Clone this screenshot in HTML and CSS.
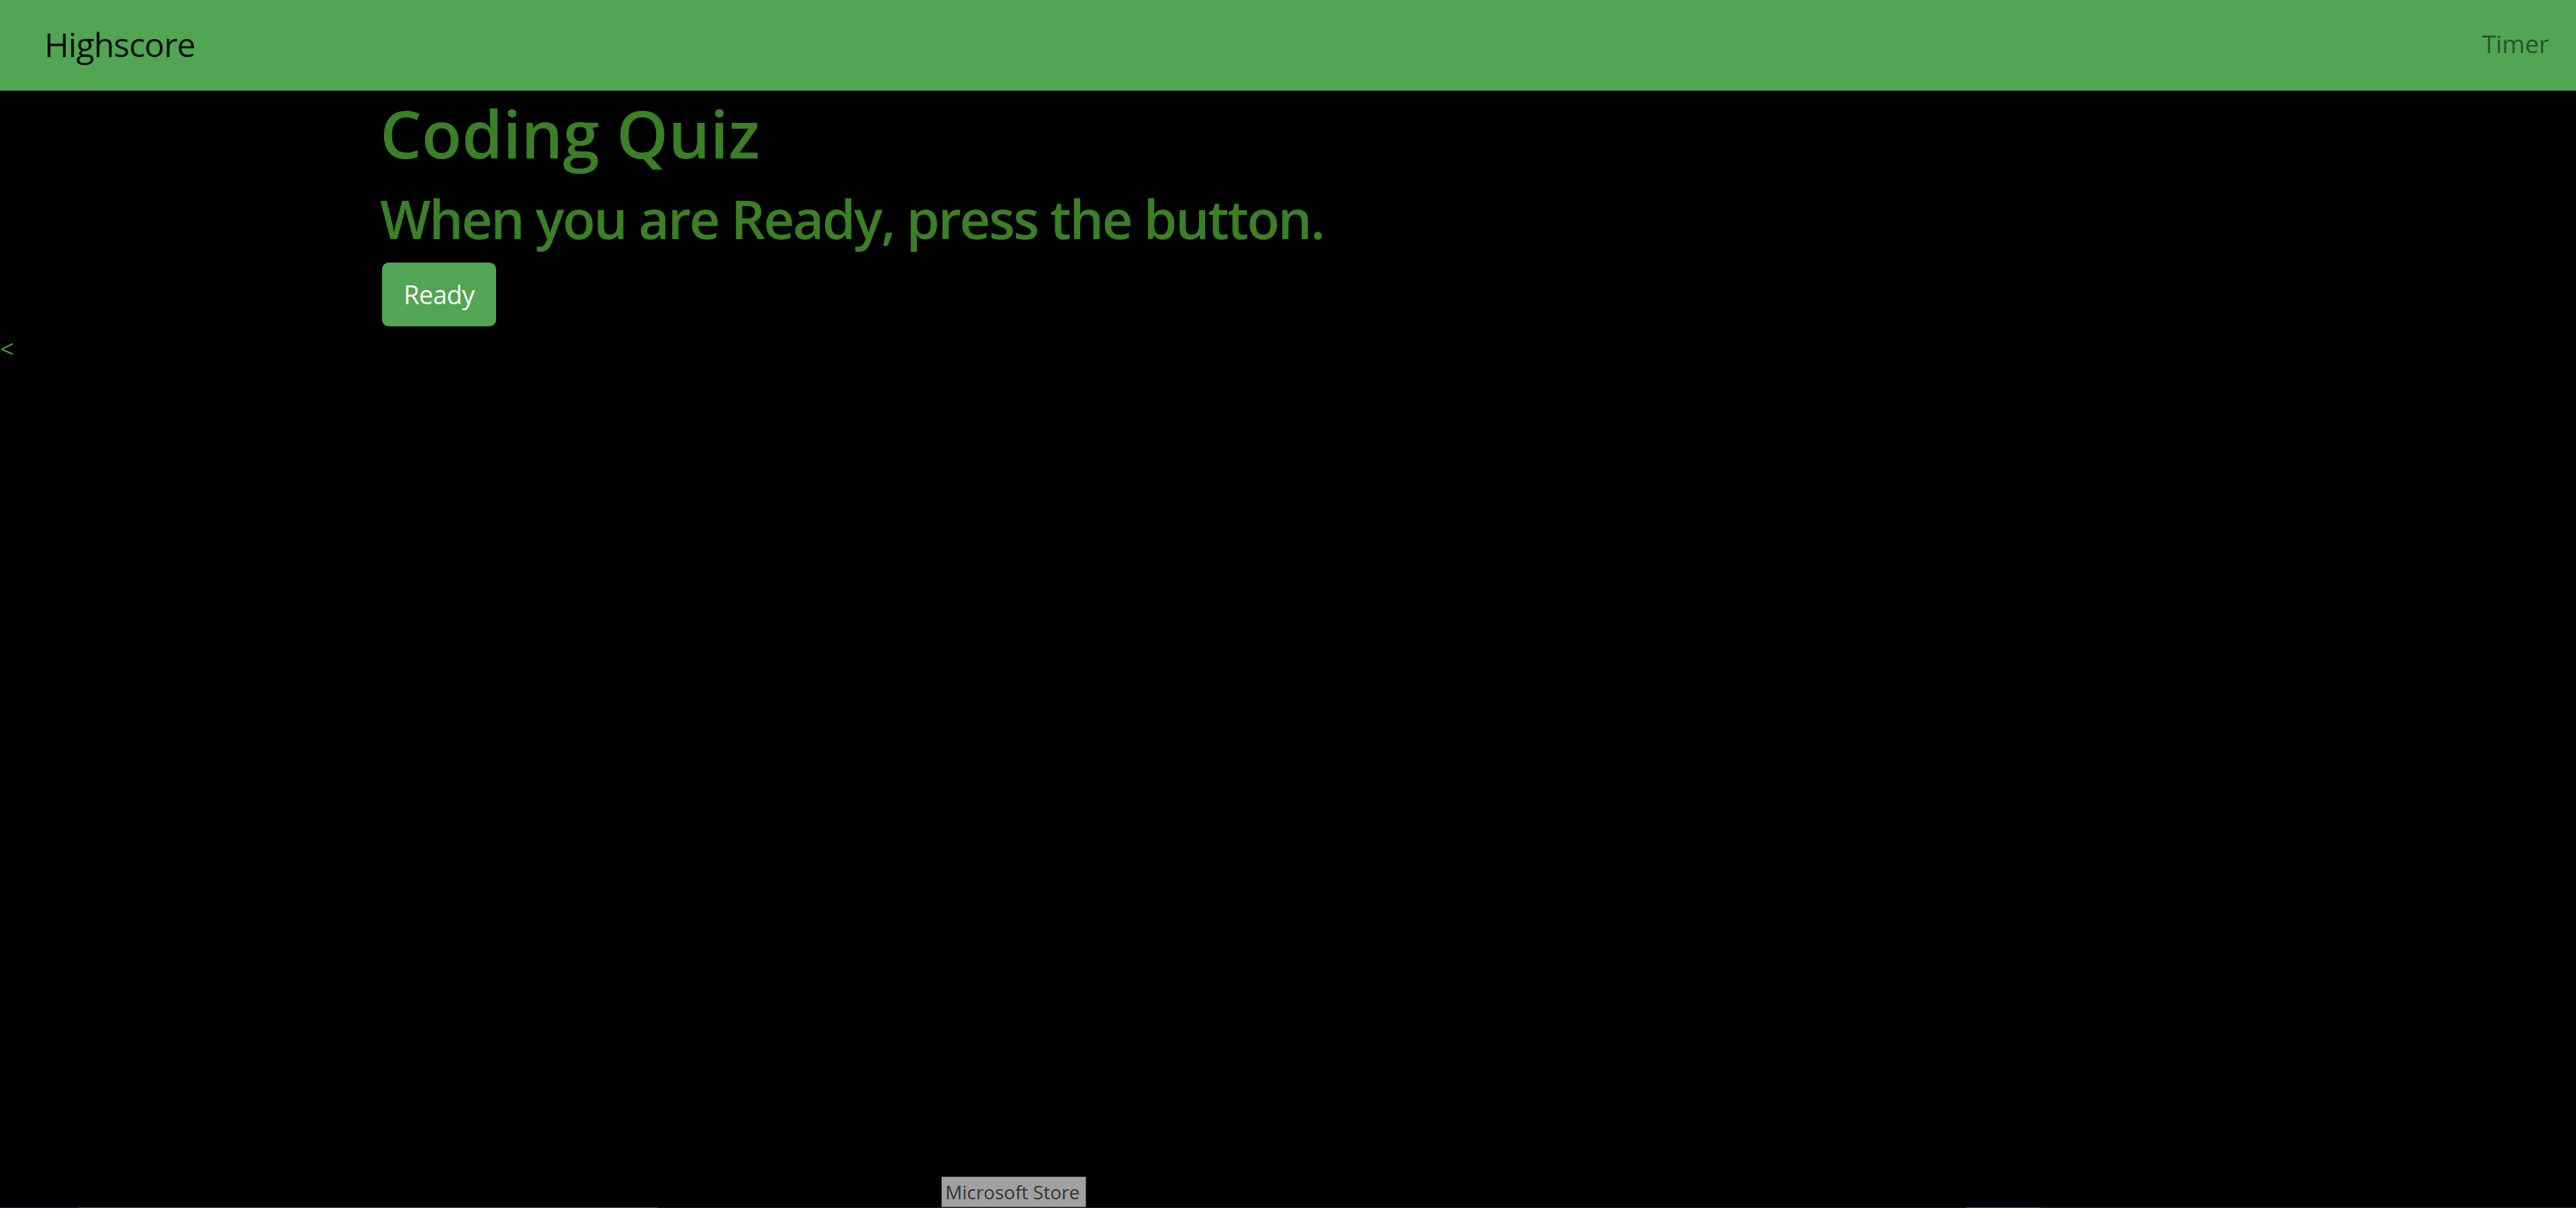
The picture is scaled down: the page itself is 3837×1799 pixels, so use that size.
FILE: index.html
```html
<!DOCTYPE html>
<html lang="en">
<head>
<meta charset="utf-8">
<title>Coding Quiz</title>
<link rel="stylesheet" href="styles.css">
</head>
<body>
<nav class="navbar">
  <a class="brand" href="#">Highscore</a>
  <span class="nav-link">Timer</span>
</nav>
<main class="main">
  <h1 class="title">Coding Quiz</h1>
  <h2 class="subtitle">When you are Ready, press the button.</h2>
  <button class="btn">Ready</button>
</main>
<div class="stray">&lt;</div>
<div class="tooltip">Microsoft Store</div>
<div class="taskline"></div>
</body>
</html>
```
FILE: styles.css
```css
html, body {
  margin: 0;
  padding: 0;
  background: #000;
  height: 100%;
  overflow: hidden;
}
body {
  font-family: "Open Sans", "Noto Sans", sans-serif;
  position: relative;
}
.navbar {
  height: 135px;
  box-sizing: border-box;
  background: #52a552;
  display: flex;
  align-items: center;
  justify-content: space-between;
  padding: 0 40px 0 66px;
}
.brand {
  font-size: 50px;
  color: rgba(0, 0, 0, 0.9);
  text-decoration: none;
  letter-spacing: -1px;
  margin-top: -4px;
}
.nav-link {
  font-size: 37px;
  color: rgba(0, 0, 0, 0.5);
  margin-top: -6px;
}
.main {
  padding-left: 566px;
}
.title {
  margin: 5px 0 0 0;
  font-size: 98px;
  line-height: 1.2;
  font-weight: 600;
  color: #3b7f27;
  letter-spacing: 0;
}
.subtitle {
  margin: 19px 0 0 0;
  font-size: 80px;
  line-height: 1.2;
  font-weight: 600;
  color: #3b7f27;
  letter-spacing: -2.5px;
}
.btn {
  margin: 18px 0 0 3px;
  display: block;
  width: 170px;
  height: 95px;
  padding: 0;
  border: none;
  border-radius: 10px;
  background: #52a552;
  color: #fff;
  font-family: "Open Sans", "Noto Sans", sans-serif;
  font-size: 38px;
  letter-spacing: -0.5px;
}
.stray {
  font-size: 36px;
  line-height: 58px;
  color: #3d9a2d;
  padding-top: 5px;
}
.tooltip {
  position: absolute;
  left: 1402px;
  top: 1752px;
  width: 216px;
  height: 46px;
  box-sizing: border-box;
  background: #a0a0a0;
  border: 1px solid #4a4a4a;
  color: #333;
  font-size: 28px;
  line-height: 44px;
  padding-left: 5px;
  white-space: nowrap;
}
.taskline {
  position: absolute;
  left: 0;
  right: 0;
  bottom: 0;
  height: 1px;
  background: linear-gradient(to right,
    #1c2b3a 0, #1c2b3a 117px,
    #5a5a5a 117px, #5a5a5a 979px,
    #1a1f2a 979px, #1a1f2a 2929px,
    #5a5e68 2929px, #5a5e68 3039px,
    #1a3838 3039px, #1a3838 100%);
}
```
